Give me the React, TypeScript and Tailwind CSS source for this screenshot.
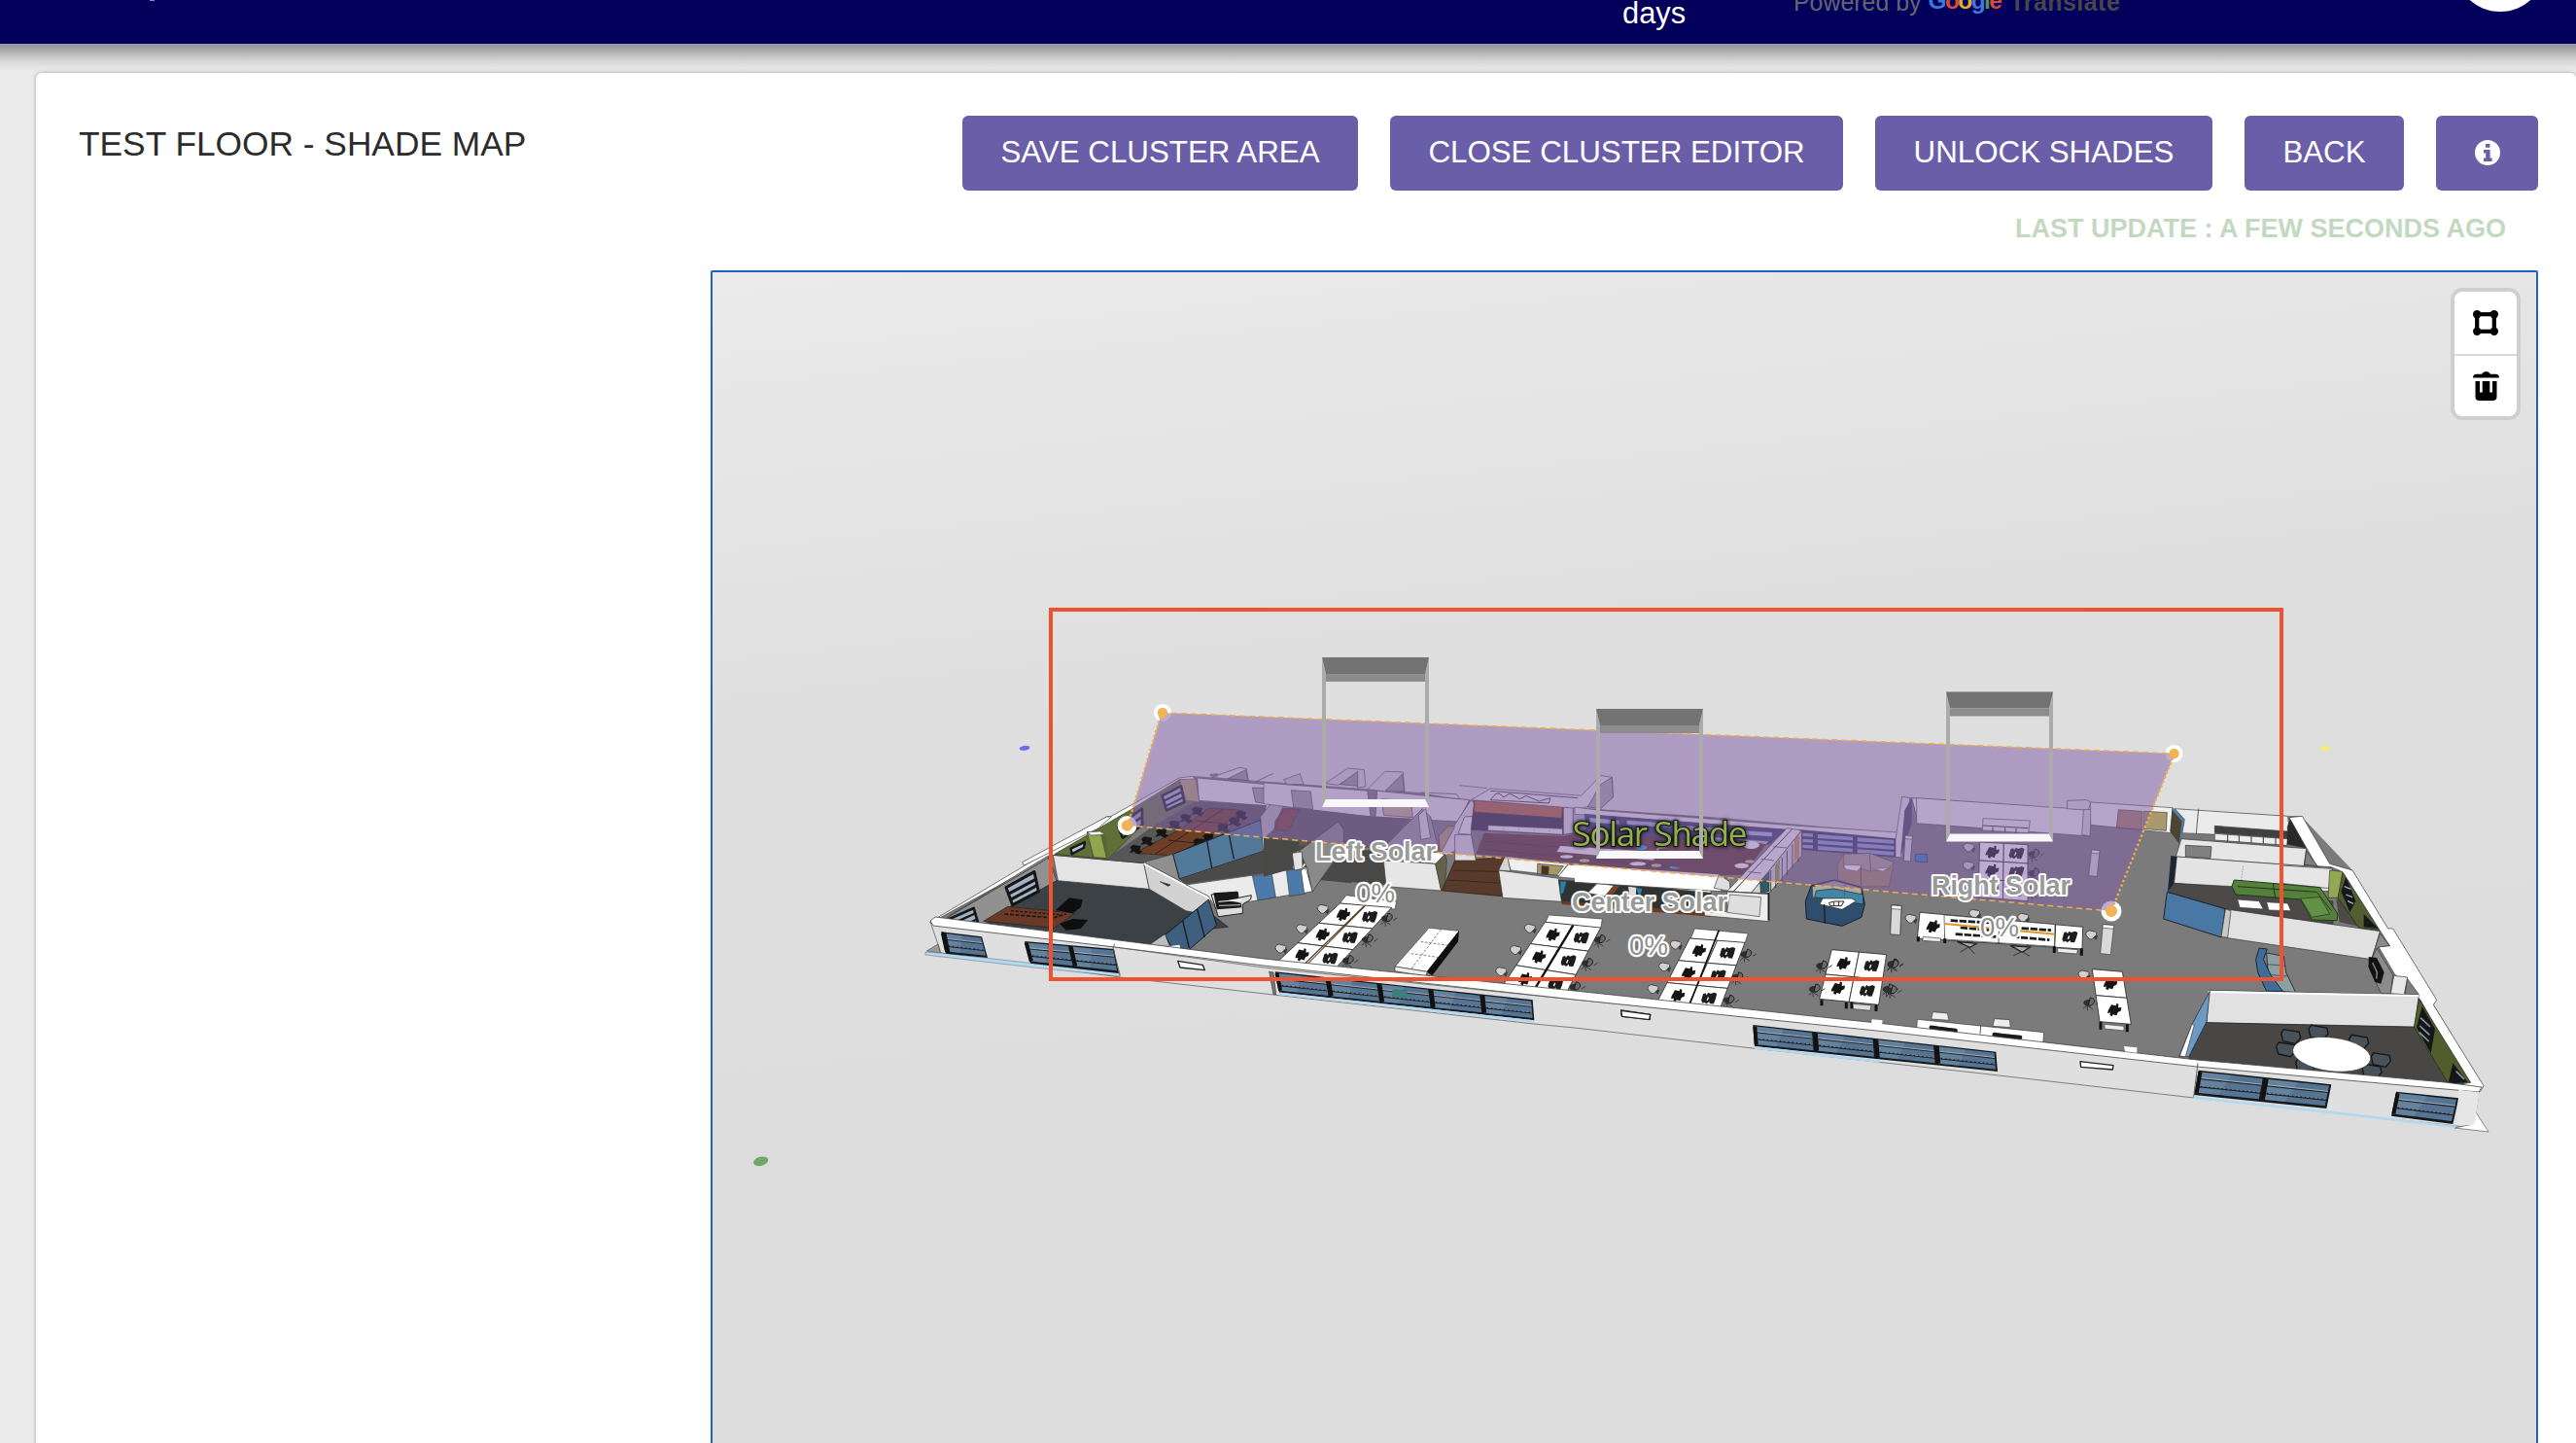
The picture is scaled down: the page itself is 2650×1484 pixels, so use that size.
import React from "react";

type Pt = [number, number];

const mix = (a: Pt, b: Pt, t: number): Pt => [a[0] + (b[0] - a[0]) * t, a[1] + (b[1] - a[1]) * t];
const at = (q: Pt[], u: number, v: number): Pt => mix(mix(q[0], q[1], u), mix(q[3], q[2], u), v);
const parse = (s: string): Pt[] => s.split(" ").map((p) => p.split(",").map(Number) as Pt);
const join = (pts: Pt[]) => pts.map((p) => p[0].toFixed(1) + "," + p[1].toFixed(1)).join(" ");

/* A drawing area at three units per pixel, with its origin at x, y */
function Zone({ x, y, children }: { x: number; y: number; children: React.ReactNode }) {
  return <g transform={`translate(${x} ${y}) scale(0.33333)`}>{children}</g>;
}

function P({ d, f, s = "#3a3a3a", w = 2 }: { d: string; f: string; s?: string; w?: number }) {
  return <polygon points={d} fill={f} stroke={s} strokeWidth={w} strokeLinejoin="round" />;
}

function L({ d, s = "#333", w = 2.5, dash }: { d: string; s?: string; w?: number; dash?: string }) {
  return <polyline points={d} fill="none" stroke={s} strokeWidth={w} strokeDasharray={dash} />;
}

function Windows({ d, n, sill = true }: { d: string; n: number; sill?: boolean }) {
  const q = parse(d);
  const out: React.ReactNode[] = [];
  for (let i = 0; i < n; i++) {
    const a = i / n + 0.03 / n;
    const b = (i + 1) / n - 0.03 / n;
    const cell = [at(q, a, 0.06), at(q, b, 0.06), at(q, b, 0.9), at(q, a, 0.9)];
    out.push(
      <g key={i}>
        <polygon points={join(cell)} fill="#557493" />
        <polygon points={join([at(cell, 0, 0), at(cell, 0.5, 0), at(cell, 0.35, 1), at(cell, 0, 1)])} fill="#6f8fae" opacity="0.5" />
        <polyline points={join([at(cell, 0, 0.32), at(cell, 1, 0.32)])} stroke="#1c1f22" strokeWidth="4.5" />
        <polyline points={join([at(cell, 0, 0.28), at(cell, 1, 0.28)])} stroke="#b9c3cc" strokeWidth="2.5" />
        <polyline points={join([at(cell, 0, 0.7), at(cell, 1, 0.7)])} stroke="#16191c" strokeWidth="5" />
        <polyline points={join([at(cell, 0, 0.67), at(cell, 1, 0.67)])} stroke="#9fabb6" strokeWidth="2" strokeDasharray="9 4" />
        <polyline points={join([at(cell, 0, 0), at(cell, 0, 1)])} stroke="#111" strokeWidth="12" />
      </g>,
    );
  }
  return (
    <g>
      <polygon points={join(q)} fill="#15181b" />
      {out}
      {sill && <polyline points={join([at(q, 0, 1.06), at(q, 1, 1.06)])} stroke="#b4d8f0" strokeWidth="8" fill="none" />}
    </g>
  );
}

function Chair({ x, y, dark }: { x: number; y: number; dark?: boolean }) {
  return dark ? (
    <g transform={`translate(${x} ${y})`}>
      <ellipse cx="0" cy="2" rx="15" ry="10" fill="#2e2e2e" />
      <path d="M6-14q16 2 12 16q-8 12-18 8z" fill="#6a6a6a" stroke="#1c1c1c" strokeWidth="3" />
      <path d="M-16 20L-4 10L14 22M-4 10L-2 26M22 8L34 0" fill="none" stroke="#3a3a3a" strokeWidth="3" />
    </g>
  ) : (
    <g transform={`translate(${x} ${y})`}>
      <path d="M2 4l18-4l-6 16z" fill="#3c3c3c" />
      <path d="M-18-4Q-16-14-6-14L12-10Q18-8 14 0L2 12Q-2 14-6 12L-16 2Z" fill="#d0d0d0" stroke="#333" strokeWidth="2.5" />
    </g>
  );
}

function Desks({ d, rows, cols, chairs = true }: { d: string; rows: number; cols: number; chairs?: boolean }) {
  const q = parse(d);
  const out: React.ReactNode[] = [];
  for (let r = 0; r < rows; r++) {
    for (let c = 0; c < cols; c++) {
      const cell = [
        at(q, c / cols, r / rows),
        at(q, (c + 1) / cols, r / rows),
        at(q, (c + 1) / cols, (r + 1) / rows),
        at(q, c / cols, (r + 1) / rows),
      ];
      const m = at(cell, 0.54, 0.5);
      out.push(
        <g key={r + "-" + c}>
          <polygon points={join(cell)} fill="#fff" stroke="#2a2a2a" strokeWidth="2.5" />
          {c % 2 === 0 ? (
            <path
              transform={`translate(${m[0]} ${m[1]})`}
              d="M-20 2L-10-16L4-13L6-20L12-18L11-7L21-8L19 3L10 7L6 17L-5 14L-8 20L-15 16L-13 9L-22 10Z"
              fill="#141414"
            />
          ) : (
            <path
              transform={`translate(${m[0]} ${m[1]})`}
              d="M-24 6L-18-14L-10-16L-8-10L-2-18L4-14L16-18L24-14L20 2L14 17L2 16L0 10L-8 17L-14 12L-20 15ZM-4-4L-8 6L-4 7L0-3Z"
              fill="#1c1c1c"
            />
          )}
        </g>,
      );
    }
    if (chairs) {
      const a = at(q, 0, (r + 0.3) / rows);
      const b = at(q, 1, (r + 0.55) / rows);
      out.push(<Chair key={"a" + r} x={a[0] - 32} y={a[1]} />);
      out.push(<Chair key={"b" + r} x={b[0] + 16} y={b[1] - 4} dark />);
    }
  }
  return <g>{out}</g>;
}

function Post({ d }: { d: string }) {
  const q = parse(d);
  return (
    <g>
      <P d={d} f="#d9d9d9" />
      <polygon points={join([q[0], q[1], at(q, 1, 0.12), at(q, 0, 0.12)])} fill="#fff" stroke="#444" strokeWidth="2" />
    </g>
  );
}

function Floor() {
  return (
    <g>
      <polygon
        points="957,948 1227,798 1390,810 1460,815 1513,823 1610,830 1760,840 1953,857 1960,820 2080,828 2127,833 2237,832 2353,839 2367,839 2420,895 2555,1118 2513,1117 2260,1094 1940,1060 1620,1026 1300,992 1147,974"
        fill="#7b7b7b"
      />
      {/* west wing */}
      <Zone x={930} y={740}>
        <P d="80,625 625,300 640,298 850,180 890,175 905,190 700,310 470,415 110,612" f="#fff" />
        <P d="370,450 365,440 625,300 640,300 600,335" f="#fff" />
        <P d="140,605 445,420 475,495 330,580 240,635 130,625" f="#919191" />
        <P d="475,495 755,520 930,585 1000,640 810,660 750,700 240,640 330,575" f="#3c4145" s="#222" />
        <P d="465,415 705,275 760,300 630,430" f="#5e6f38" s="#2c361a" />
        <P d="705,275 850,185 900,190 910,250 760,340" f="#68784a" s="#444" />
        <P d="905,180 1170,205 1120,280 1105,265 910,250" f="#ececec" s="#444" />
        <P d="950,178 1035,148 1057,152 1063,188 1040,184 985,182" f="#e2e2e2" s="#444" />
        <P d="1000,182 1055,155 1062,188" f="#999" s="#444" />
        <P d="943,168 970,166 968,176 945,175" f="#777" s="none" />
        <L d="1085,192 1140,166" s="#555" />
        <P d="625,430 760,335 900,252 1120,265 1100,320 840,415 740,443" f="#575757" s="none" />
        <P d="850,185 900,183 912,255 870,250" f="#b4a774" s="#555" />
        <P d="565,347 607,350 627,428 585,425" f="#8fa64f" s="#333" />
        <P d="565,347 605,345 620,355 578,357" f="#fff" />
        <P d="607,352 622,360 630,428 624,430" f="#56682d" s="none" />
        <P d="515,398 558,378 555,395 518,415" f="#a9c0d4" s="#161616" w={7} />
        <P d="660,330 735,275 735,325 675,365" f="#8ca4b8" s="#1d1d1d" w={8} />
        <L d="668,345 735,300" s="#1d1d1d" w={8} />
        <P d="797,235 855,205 865,255 810,280" f="#9fb8d8" s="#222" w={8} />
        <L d="800,252 860,222" s="#222" w={6} />
        <L d="805,268 862,240" s="#222" w={6} />
        <P d="940,273 1045,280 955,350 835,420 712,412 860,335" f="#6c3f26" s="#222" />
        <L d="985,277 775,415" s="#2c1a12" />
        <L d="900,312 1000,322" s="#2c1a12" />
        <L d="815,372 910,382" s="#2c1a12" />
        {([[715, 400], [750, 375], [795, 350], [835, 325], [870, 305], [905, 283], [1040, 295], [1020, 315], [985, 335], [940, 365], [910, 380]] as Pt[]).map(([x, y]) => (
          <path key={x} transform={`translate(${x} ${y})`} d="M-18-6L-8-14L16-10L12 4L22 6L10 16L-4 8L-20 12L-12 2Z" fill="#151515" />
        ))}
        {/* white partition and slanted wall */}
        <P d="460,418 740,443 757,523 475,497" f="#e4e4e4" />
        <P d="740,443 950,555 905,597 870,590 757,523" f="#d2d2d2" />
        <L d="740,443 950,555" s="#fff" w={7} />
        <P d="790,500 822,510 815,514" f="#222" />
        <P d="740,440 830,415 850,490 870,508" f="#8f8f8f" />
        <P d="830,415 1100,310 1112,405 850,492" f="#52789a" s="#1e1e1e" w={3} />
        <L d="935,375 950,458" s="#1e1e1e" w={4} />
        <L d="1003,355 1018,430" s="#1e1e1e" w={4} />
        <P d="870,508 850,492 1112,405 1140,365 1380,375 1380,505 1285,495 1240,455" f="#4a4a48" s="none" />
        <P d="1100,300 1175,205 1190,215 1120,395 1108,402" f="#b5b5b5" />
        <P d="1190,210 1380,230 1380,285 1195,270" f="#e9e9e9" />
        <P d="1120,395 1190,270 1380,285 1380,380" f="#585858" s="none" />
        <P d="1075,210 1140,212 1138,262 1085,255" f="#a0a0a0" />
        <P d="1195,220 1252,222 1262,275 1205,270" f="#a0a0a0" />
        <P d="1145,315 1170,275 1220,275 1190,345 1145,340" f="#7a443a" />
        <P d="870,510 1080,480 1245,455 1258,530 1090,558 960,580 940,545" f="#ebebeb" />
        <P d="1075,482 1135,475 1147,548 1092,558" f="#4c7ba9" />
        <P d="1180,466 1225,460 1237,538 1190,545" f="#4c7ba9" />
        <P d="1195,415 1215,405 1230,410 1230,458 1200,460" f="#e0e0e0" />
        <P d="1245,455 1340,315 1357,330 1357,400 1290,490 1258,530" f="#9a9a9a" />
        <L d="1230,455 1335,315" s="#fff" w={5} />
        {/* glass corner */}
        <P d="805,665 940,555 965,635 880,710 825,700" f="#3f5f80" s="#1a1a1a" w={3} />
        <L d="860,620 880,705" s="#1a1a1a" w={4} />
        <L d="905,585 928,672" s="#1a1a1a" w={4} />
        <P d="750,700 805,662 820,700" f="#bdbdbd" />
        <P d="815,700 850,695 855,712 830,712" f="#fff" s="none" />
        <P d="948,540 1030,532 1032,550 1072,542 1070,555 1045,570 1045,598 970,608" f="#dedede" s="#222" w={3} />
        <P d="955,535 1028,530 1032,552 1000,558 1040,566 1042,580 965,586" f="#191919" s="none" />
        <L d="970,562 1040,556" s="#fff" w={3} />
        <L d="972,574 1038,572" s="#ccc" w={3} />
        {/* meeting table */}
        <P d="320,577 528,597 465,643 245,622" f="#6a3a28" s="#222" />
        <L d="310,600 460,612 500,600" s="#251510" w={5} dash="12 5" />
        <L d="330,590 480,602" s="#251510" w={4} dash="9 5" />
        <path d="M468 588L510 550L552 556L545 580L520 598ZM480 630L520 615L568 618L545 645L500 650ZM318 645L345 640L368 645L350 658L318 652Z" fill="#0e0e0e" />
        <P d="315,518 402,470 415,530 335,572" f="#9fb2c6" s="#161616" w={9} />
        <L d="322,538 405,494" s="#161616" w={9} />
        <L d="328,556 410,512" s="#161616" w={9} />
        <P d="140,615 215,582 232,640 160,628" f="#9fb2c6" s="#161616" w={8} />
        <L d="160,625 222,597" s="#161616" w={7} />
        <L d="182,636 228,615" s="#161616" w={7} />
        <L d="445,425 470,495" />
        <L d="130,613 460,418 740,443" s="#444" w={3} />
      </Zone>

      {/* centre */}
      <Zone x={1300} y={640}>
        <P d="0,495 320,520 330,600 120,575 0,560" f="#eaeaea" s="#444" />
        <P d="85,518 145,522 152,578 92,570" f="#a0a0a0" />
        <P d="190,497 260,450 310,455 315,507 290,510 285,470 230,502" f="#d8d8d8" s="#444" />
        <P d="235,500 290,460 290,505" f="#999" />
        <P d="320,515 375,460 430,462 435,522 395,525" f="#dcdcdc" s="#444" />
        <P d="375,520 428,468 433,520" f="#999" />
        <P d="62,485 112,467 123,500 72,500" f="#c9c9c9" s="#444" />
        <P d="350,520 635,548 600,615 510,610 345,600" f="#e8e8e8" s="#444" />
        <P d="365,545 455,552 460,602 370,595" f="#c7b392" />
        <P d="120,575 345,600 455,605 365,700 130,680 0,665 30,640" f="#585858" s="none" />
        <P d="35,635 60,580 108,577 78,642 40,642" f="#7a443a" />
        <P d="110,705 230,615 247,640 247,690 150,832 135,760" f="#8a8a8a" />
        <P d="180,795 240,700 375,705 378,810" f="#484846" s="none" />
        <P d="0,665 110,678 90,760 0,785" f="#484846" s="none" />
        <P d="88,712 118,708 120,760 95,765" f="#e4e4e4" />
        <P d="115,765 130,758 150,830 125,835" f="#fff" />
        <P d="365,700 490,575 515,600 540,700" f="#999" />
        <P d="478,595 500,575 515,665 485,670" f="#ddd" />
        <P d="485,525 595,530 605,545 560,540 500,530" f="#e2e2e2" />
        <P d="640,548 540,700 560,720 590,705 660,570" f="#ddd" />
        <P d="540,660 570,628 590,630 545,715" f="#b49e70" />
        <P d="370,735 530,745 548,828 378,815" f="#e6e6e6" />
        <P d="360,722 545,708 560,720 530,745" f="#fff" />
        <P d="530,745 560,715 565,735 560,800 548,828" f="#65624c" />
        <P d="590,735 750,725 735,845 550,828" f="#573a2b" s="#2c1d14" />
        <L d="585,765 740,770" s="#3c261b" w={3} />
        <L d="570,795 738,805" s="#3c261b" w={3} />
        <P d="590,655 640,655 655,735 590,735" f="#ddd" />
        <P d="620,600 645,598 640,655 600,652" f="#eee" />
        {/* kitchen */}
        <P d="650,550 925,568 925,655 640,640" f="#2c2c3c" />
        <P d="650,550 922,568 920,604 650,585" f="#b0683c" s="#5a3018" />
        <P d="692,626 922,637 922,655 692,642" f="#f0f0f0" />
        <L d="692,634 922,646" s="#555" w={2} dash="3 44" />
        <P d="680,650 930,660 1100,600 1380,640 1380,785 750,722 655,715" f="#5a3a2c" s="none" />
        <L d="680,675 1380,730" s="#452c20" w={3} />
        <L d="670,700 1380,765" s="#452c20" w={3} />
        <P d="925,570 955,572 955,650 925,655" f="#e0e0e0" />
        <P d="955,572 1380,605 1380,650 955,620" f="#b8bdd4" s="#444" />
        <P d="640,548 700,513 980,535 1040,473 1075,478 1078,540 980,575" f="#ebebeb" s="#444" />
        <path d="M700 520L970 542M715 530Q730 524 740 540L760 528L790 545L810 535L850 552L885 542L880 558L700 548Z" fill="none" stroke="#444" strokeWidth="3" />
        <P d="1000,570 1040,500 1075,478 1078,540 1040,575" f="#aaa" />
        <L d="603,503 690,512" s="#555" w={2} />
        <P d="915,690 1330,715 1320,745 905,708" f="#f6f6f6" s="none" />
        <ellipse cx="990" cy="735" rx="16" ry="5" fill="#c9d27a" />
        <ellipse cx="1165" cy="695" rx="18" ry="8" fill="#35a5e0" />
        <ellipse cx="1230" cy="700" rx="18" ry="8" fill="#c9d27a" />
        <ellipse cx="1270" cy="755" rx="18" ry="6" fill="#35a5e0" />
        <ellipse cx="1212" cy="750" rx="16" ry="5" fill="#c9d27a" />
        <ellipse cx="1155" cy="745" rx="26" ry="6" fill="#fff" />
        <ellipse cx="935" cy="723" rx="20" ry="5" fill="#fff" />
        {/* reception counter */}
        <P d="725,765 910,790 920,862 738,850" f="#e6e6e6" />
        <P d="750,722 940,745 912,782 762,765" f="#efefef" />
        <P d="725,765 745,722 752,722 762,768" f="#d5d5d5" />
        <P d="845,745 925,752 905,780 845,776" f="#a89766" />
        <P d="858,752 880,754 878,778 858,776" f="#4a3323" />
        <P d="910,795 1380,825 1380,905 920,865" f="#2f3430" />
        <P d="915,798 935,800 925,835 915,840" f="#2b7fae" />
        <P d="1030,805 1080,812 1055,845 1000,835" f="#fff" s="#555" />
        <P d="1080,812 1098,814 1060,862 1040,858" f="#7a4425" s="none" />
        <P d="1125,815 1150,818 1148,850 1130,850" f="#ddd" s="none" />
        <P d="1150,820 1168,822 1160,850" f="#2b7fae" s="none" />
        <P d="920,860 1380,895 1380,908 920,870" f="#6c3a22" s="none" />
        <P d="940,747 1380,785 1380,835 908,785" f="#fff" s="#444" />
        {/* desks */}
        <P d="255,842 410,862 405,885 235,867" f="#fff" />
        <Desks d="235,867 395,880 215,1075 40,1050" rows={3} cols={2} />
        <L d="310,875 125,1055" s="#5d3f16" w={4} />
        <P d="510,943 603,952 505,1078 405,1062" f="#fff" />
        <P d="603,952 600,985 520,1090 503,1078" f="#0d0d0d" s="none" />
        <P d="405,1062 505,1078 500,1092 405,1076" f="#eee" />
        <L d="547,948 455,1070" s="#444" w={2} dash="8 5" />
        <L d="485,985 578,998" s="#444" w={2} dash="8 5" />
        <L d="455,1022 550,1035" s="#444" w={2} dash="8 5" />
        <P d="880,903 1045,915 1040,945 870,925" f="#fff" />
        <Desks d="868,925 1040,942 925,1160 735,1125" rows={3} cols={2} />
        <L d="955,935 825,1150" s="#111" w={7} />
      </Zone>

      {/* right of centre */}
      <Zone x={1620} y={700}>
        <P d="0,390 75,400 690,448 1000,468 990,490 660,460 0,412" f="#ededed" s="#444" />
        <P d="30,412 650,460 600,505 40,470" f="#39406c" />
        <P d="45,422 138,430 138,445 45,437" f="#aab9e2" />
        <P d="160,430 300,440 300,455 160,445" f="#aab9e2" />
        <P d="320,445 470,455 470,470 320,460" f="#aab9e2" />
        <P d="490,460 610,467 610,482 490,474" f="#aab9e2" />
        <P d="400,480 600,495 590,506 400,495" f="#aab9e2" />
        <P d="690,460 990,488 1000,545 690,520" f="#373c60" />
        {[0, 1, 2].map((i) => (
          <g key={i} transform={`translate(0 ${i * 18})`}>
            <polygon points="750,474 858,482 858,493 750,486" fill="#8fa0d0" />
            <polygon points="872,484 985,492 985,503 872,496" fill="#8fa0d0" />
            <polygon points="703,470 735,472 735,482 703,480" fill="#8fa0d0" />
          </g>
        ))}
        <P d="260,520 500,490 590,505 520,600 430,600 240,560" f="#5a3a2c" s="none" />
        <ellipse cx="545" cy="507" rx="25" ry="12" fill="#fff" />
        <ellipse cx="515" cy="571" rx="22" ry="8" fill="#fff" />
        <ellipse cx="540" cy="558" rx="14" ry="5" fill="#c9d27a" />
        <P d="0,568 445,598 450,650 0,622" f="#fff" s="none" />
        <P d="430,640 445,598 478,620 480,650" f="#ddd" />
        <P d="470,650 655,455 700,462 545,655" f="#f4f4f4" />
        <L d="490,650 672,457" s="#333" w={3} />
        <L d="535,590 575,594" s="#555" />
        <L d="575,550 615,555" s="#555" />
        <L d="612,512 655,516" s="#555" />
        <P d="545,655 700,462 700,540 600,655" f="#d4d4d4" />
        <path d="M575 615V655M590 600V650M605 585V650M620 570V640M640 545V618M655 525V600M672 505V580M690 480V560" stroke="#444" strokeWidth="3" />
        <P d="572,618 600,590 600,650 574,655" f="#2d5c64" />
        <P d="618,570 632,552 632,615 618,628" f="#8e9f3c" s="none" />
        <P d="678,490 692,475 692,545 678,558" f="#c6904a" s="none" />
        {/* white cabinet front */}
        <P d="470,650 600,658 600,743 400,725 400,715 470,712" f="#ededed" s="#333" />
        <P d="478,660 575,668 570,728 470,715" f="#dedede" s="#444" />
        <L d="0,622 450,650 600,658" s="#444" />
        <L d="598,655 598,740" s="#222" w={5} />
        {/* booth seating */}
        <P d="810,570 830,535 910,533 985,560 970,635 880,635 812,615" f="#a68c66" s="#555" />
        <P d="830,535 910,533 985,560 968,582 912,588 885,580 830,578" f="#a9a493" s="#555" />
        <P d="830,568 890,570 870,588 835,582" f="#fff" s="#666" />
        <P d="920,580 970,578 950,588" f="#fff" s="#666" />
        <L d="910,533 914,588" s="#555" />
        <L d="883,570 883,635" s="#444" />
        <P d="712,680 730,632 800,615 885,638 895,690 885,730 825,757 715,735" f="#2f4d6d" s="#15202b" w={3} />
        <P d="733,636 800,617 885,640 885,672 735,670" f="#a9aaa0" s="#444" />
        <P d="745,648 800,642 890,660 890,690 740,668" f="#4286a6" s="#222" />
        <P d="765,672 855,672 868,680 825,706 756,690" f="#fff" s="#222" />
        <path d="M785 685l18-4h28l-8 14h-35zM800 684v10M815 682v12" fill="none" stroke="#222" strokeWidth="3" />
        <L d="770,690 772,750" s="#111" w={3} />
        <L d="835,615 832,665" s="#555" w={2} />
        {/* partitions */}
        <P d="990,490 1010,358 1035,362 1010,545 990,545" f="#e6e6e6" s="#444" />
        <P d="1018,400 1040,360 1040,440 1005,545" f="#4b4660" s="none" />
        <P d="1040,362 1380,387 1380,460 1060,438" f="#f1f1f1" s="#444" />
        <L d="1060,365 1060,438" s="#555" w={3} />
        <Post d="1020,478 1042,480 1036,558 1015,556" />
        <P d="1052,535 1088,535 1088,560 1050,558" f="#2a7fc0" s="#333" />
        {/* desks */}
        <P d="370,765 535,780 525,810 358,795" f="#fff" />
        <Desks d="355,795 525,808 445,1020 250,1000" rows={3} cols={2} />
        <L d="445,770 350,1010" s="#111" w={5} />
        <Desks d="793,830 962,845 938,1000 755,982" rows={2} cols={2} chairs={false} />
        <path d="M762 985V1003M838 992V1012M855 992V1012M930 1000V1020" stroke="#111" strokeWidth="9" />
        <P d="858,997 915,1002 912,1018 860,1013" f="#ddd" />
        <Chair x={760} y={878} dark />
        <Chair x={738} y={950} dark />
        <Chair x={980} y={872} dark />
        <Chair x={965} y={950} dark />
        <Post d="977,692 1008,694 1004,784 974,782" />
      </Zone>

      {/* east wing */}
      <Zone x={1940} y={680}>
        <P d="95,422 620,458 630,540 95,500" f="#f1f1f1" s="#444" />
        <P d="560,430 620,428 632,435 625,460 560,455" f="#e0e0e0" s="#444" />
        <P d="610,458 635,458 630,540 605,535" f="#dadada" s="#444" />
        <P d="632,435 885,452 880,530 632,505" f="#f1f1f1" s="#444" />
        <P d="718,458 790,463 790,520 712,513" f="#a98562" />
        <P d="795,463 868,467 865,523 795,517" f="#aa996c" />
        <P d="885,455 920,490 905,560 878,525" f="#4d4432" s="#333" />
        <L d="885,455 918,492 905,600 868,710" s="#4f80aa" w={8} />
        <P d="892,455 1240,478 1250,545 915,530 922,488" f="#ebebeb" s="#444" />
        <L d="965,455 958,532" s="#444" />
        <P d="915,530 1250,560 1290,580 915,550" f="#777" s="none" />
        <P d="1015,508 1240,525 1240,545 1015,530" f="#404040" />
        <P d="1015,532 1240,548 1238,568 1015,552" f="#eee" />
        <path d="M1055 535V555M1090 538V558M1128 540V560M1165 543V563M1203 546V566" stroke="#333" strokeWidth="3" />
        <P d="912,548 1298,578 1290,632 895,603" f="#e6e6e6" s="#333" />
        <P d="925,568 1005,572 1002,608 925,603" f="#808080" s="#333" />
        <P d="898,603 1378,638 1372,710 1060,700 890,685" f="#e3e3e3" s="#333" />
        <P d="880,600 898,603 888,690 870,710" f="#1c2530" s="none" />
        <P d="890,685 1070,695 1380,740 1380,812 1050,765 870,712" f="#4b4a49" s="#333" />
        <L d="1103,632 1095,690" s="#777" w={2} dash="4 4" />
        <P d="868,712 1047,764 1036,852 857,795" f="#4a78a5" s="#222" w={3} />
        {/* desks in the purple cluster */}
        <P d="300,485 445,492 440,530 298,522" f="#eee" s="#444" />
        <L d="300,507 440,515" s="#333" w={3} />
        <path d="M330 512v14M368 514v14M402 516v14" stroke="#333" strokeWidth="3" />
        <Desks d="290,558 438,566 438,740 285,728" rows={3} cols={2} />
        <Post d="635,582 660,584 652,664 626,662" />
        <Post d="18,753 48,755 44,845 14,842" />
        <Post d="670,812 704,815 694,905 662,902" />
        <Chair x={78} y={795} />
        <Chair x={275} y={780} />
        <Chair x={425} y={792} />
        <Desks d="105,775 608,820 606,888 97,855" rows={1} cols={6} chairs={false} />
        <P d="180,783 522,812 520,880 182,858" f="#fff" />
        <path d="M200 800L345 808M230 822L330 830M215 842L340 850M365 820L510 830M390 850L505 860" stroke="#1a1a1a" strokeWidth="8" strokeDasharray="22 5" />
        <L d="182,810 522,842" s="#e0962a" w={6} />
        <L d="350,800 348,870" s="#333" />
        <path d="M100 850V865M182 856V870M520 880V900M604 886V908" stroke="#111" strokeWidth="9" />
        <P d="115,850 170,855 168,866 113,862" f="#eee" />
        <P d="530,885 592,890 590,903 530,898" f="#eee" />
        <path d="M220 865l60 6-20 12zM385 878l60 4-24 16z" fill="#aaa" stroke="#222" strokeWidth="4" />
        <path d="M255 882l-26 16M255 882l20 22M420 896l-26 12M420 896l24 14" fill="none" stroke="#333" strokeWidth="3" />
        <Chair x={635} y={845} />
        <Chair x={20} y={935} dark />
        <Chair x={15} y={1015} dark />
        <Chair x={612} y={968} />
        <Chair x={625} y={1052} dark />
        <Desks d="637,950 730,958 757,1120 660,1112" rows={2} cols={1} chairs={false} />
        <path d="M663 1112V1136M745 1120V1144" stroke="#111" strokeWidth="9" />
        <P d="675,1120 735,1126 735,1140 675,1134" f="#eee" />
        <P d="145,1082 190,1086 195,1108 140,1104" f="#eee" />
        <P d="335,1103 382,1106 385,1130 330,1126" f="#eee" />
        <P d="97,1105 488,1145 485,1180 95,1140" f="#fff" />
        <L d="293,1125 291,1150" s="#333" />
        <path d="M140 1130L215 1140M335 1152L415 1161" stroke="#1b1b1b" strokeWidth="13" strokeLinecap="round" strokeDasharray="22 7" />
      </Zone>

      <Zone x={2180} y={780}>
        {/* lounge */}
        <P d="500,330 655,340 680,400 640,400 500,385" f="#e6e6e6" s="#333" />
        <P d="650,345 700,350 680,430 645,430" f="#93a951" s="#333" />
        <P d="355,375 620,398 675,480 672,500 595,498 560,435 360,420 348,395" f="#55803c" s="#22361a" w={3} />
        <L d="365,395 610,412 655,470" s="#22361a" w={3} />
        <L d="475,385 482,432" s="#22361a" w={3} />
        <P d="560,432 620,428 650,480 595,490" f="#639047" s="#22361a" />
        <P d="365,435 432,440 445,465 372,460" f="#fff" />
        <P d="455,443 520,447 530,470 462,468" f="#fff" />
        <P d="330,465 805,533 780,620 328,553" f="#e1e1e1" s="#333" />
        <P d="328,465 345,470 335,553 315,550" f="#c8c8c8" s="#333" />
        <P d="670,435 695,430 745,520 680,505" f="#4b4a49" s="none" />
        <P d="690,350 805,530 740,522 675,430" f="#525e31" s="#222" />
        <path d="M700 365L730 440L712 475L685 410ZM755 480L800 525L755 520Z" fill="#16181a" />
        <path d="M695 395l20 8M700 420l20 8M705 440l18 8" stroke="#9fb0bd" strokeWidth="4" />
        {/* outer wall rim */}
        <P d="525,182 565,178 650,325 720,345 830,525 845,525 980,745 970,760 1125,1010 1115,1027 1050,1015 1070,998 930,745 850,665 800,580 835,578 690,350 655,335 610,332" f="#fff" s="#333" />
        <P d="528,190 575,275 520,265 520,210" f="#28292b" s="#222" />
        <P d="578,285 612,332 572,328" f="#808080" s="#333" />
        <P d="805,540 835,578 800,582 780,615" f="#8a8a8a" s="#333" />
        <P d="795,585 845,668 838,725 808,725 770,640" f="#8b8b8b" s="#333" />
        <path d="M770 612L795 615L818 660L808 695L790 690L770 645Z" fill="#111" />
        <path d="M782 630l14 30 -2 20" stroke="#777" strokeWidth="5" fill="none" />
        <P d="848,670 890,675 880,728 838,725" f="#e8e8e8" s="#333" />
        <P d="890,680 925,728 882,728" f="#7d7d7d" s="#333" />
        {/* curved bench */}
        <path d="M455 600L508 610L515 660L545 722L500 718L460 665Z" fill="#8aa0a2" stroke="#333" strokeWidth="3" />
        <path d="M432 585L457 588L445 620L468 668L505 718L455 718L428 660L422 620Z" fill="#3f6d98" stroke="#182634" strokeWidth="3" />
        <path d="M457 635L512 640M470 668L520 672" stroke="#333" strokeWidth="2" />
        {/* oval table room */}
        <P d="278,715 925,730 912,830 270,815" f="#e1e1e1" s="#333" />
        <L d="275,720 925,732" s="#fff" w={6} />
        <P d="262,815 912,828 1020,1008 230,935 215,925" f="#484745" s="#222" />
        <P d="280,718 270,812 215,920 185,920 225,820" f="#6c9ac4" s="#222" />
        <P d="225,820 232,822 205,920 187,918" f="#fff" s="#333" />
        <P d="925,742 1085,1000 1020,1010 910,828" f="#515e2c" s="#222" />
        <path d="M935 765L975 835L962 910L918 830ZM1030 940L1075 998L1015 1005Z" fill="#14171a" />
        <path d="M930 800l30 28M928 825l30 28M926 845l30 28M1040 965l25 25" stroke="#8798a5" strokeWidth="5" />
        {([[530, 858], [615, 845], [740, 875], [808, 930], [515, 898], [575, 948], [780, 965]] as Pt[]).map(([x, y]) => (
          <path key={x} transform={`translate(${x} ${y})`} d="M-30-10L-22-22L26-14L30 4L14 22L-24 14Z" fill="#48525b" stroke="#161616" strokeWidth="4" />
        ))}
        <ellipse cx="656" cy="913" rx="121" ry="52" fill="#fff" stroke="#333" strokeWidth="2" transform="rotate(7 656 913)" />
      </Zone>
    </g>
  );
}

function FrontWall() {
  return (
    <g strokeLinejoin="round">
      <polygon
        points="957,948 968,980 1152,1005 1310,1023 1578,1053 1620,1057 1803,1078 2030,1103 2257,1129 2527,1158 2545,1160 2550,1123 2513,1117 2260,1094 1940,1060 1620,1028 1300,995 1147,974"
        fill="#dfdfdf"
        stroke="#555"
        strokeWidth="0.7"
      />
      <polygon
        points="957,947 962,943 1143,966 1300,986 1620,1019 1940,1053 2260,1090 2515,1113 2553,1118 2550,1123 2515,1120 2260,1097 1940,1061 1620,1028 1300,993 1147,974 960,952"
        fill="#fff"
        stroke="#444"
        strokeWidth="0.8"
      />
      <Zone x={930} y={740}>
        <P d="70,714 105,693 112,720" f="#999" s="#555" />
        <P d="66,717 130,722 665,782 665,792 400,765 66,726" f="#b4d8f0" s="#667" w={1.5} />
        <Windows d="115,655 240,670 258,735 130,722" n={1} sill={false} />
        <Windows d="372,684 648,708 663,783 390,752" n={2} sill={false} />
        <P d="115,655 130,658 143,722 128,720" f="#111" s="none" />
        <L d="650,692 645,705 667,790" s="#555" />
        <P d="845,745 922,757 928,773 852,765" f="#fff" s="#222" w={4} />
        <P d="1127,778 1140,780 1148,848 1140,848" f="#777" />
      </Zone>
      <Zone x={1300} y={640}>
        <Windows d="35,1078 830,1165 835,1228 48,1142" n={5} />
        <P d="398,1132 445,1135 438,1160 395,1155" f="#3d7d7a" s="none" />
        <P d="1103,1197 1193,1210 1192,1225 1105,1215" f="#fff" s="#222" w={4} />
      </Zone>
      <Zone x={1620} y={700}>
        <Windows d="550,1062 1300,1145 1305,1206 555,1128" n={4} sill={false} />
        <L d="555,1132 940,1175" s="#b4d8f0" w={8} />
        <P d="143,1018 233,1030 230,1046 146,1036" f="#fff" s="#222" w={4} />
        <P d="917,1045 950,1048 948,1062 915,1058" f="#fff" s="none" />
      </Zone>
      <Zone x={1940} y={680}>
        <P d="600,1235 702,1247 700,1260 602,1252" f="#fff" s="#222" w={4} />
        <P d="735,1188 775,1192 775,1208 738,1204" f="#fff" s="none" />
      </Zone>
      <Zone x={2180} y={780}>
        <L d="243,940 240,965 230,1045" s="#444" />
        <P d="1100,1090 1140,1152 1035,1140 1085,1130" f="#fff" s="#555" />
        <Windows d="245,962 655,1006 640,1080 232,1038" n={2} sill={false} />
        <Windows d="855,1028 1048,1048 1030,1128 840,1103" n={1} sill={false} />
        <L d="230,1046 640,1090 1038,1137" s="#b4d8f0" w={8} />
        <P d="1048,1022 1112,1030 1098,1125 1085,1132 1042,1130" f="#e6e6e6" s="none" />
      </Zone>
    </g>
  );
}

function Shade({ x, y }: { x: number; y: number }) {
  return (
    <g transform={`translate(${x} ${y})`}>
      <path d="M0 0L4 17V146L0 154ZM110 0L106 17V146L110 154Z" fill="#ababab" />
      <path d="M0 0H110L106 17H4Z" fill="#737373" />
      <path d="M4 17H106V25H4Z" fill="#8c8c8c" />
      <path d="M4 146H106L110 154H0Z" fill="#f8f7fa" />
    </g>
  );
}

function Label({ x, y, w, children }: { x: number; y: number; w: number; children: string }) {
  return (
    <text
      x={x}
      y={y}
      textLength={w}
      fontSize="27"
      fontWeight="700"
      fill="#989a98"
      stroke="#fff"
      strokeWidth="4"
      strokeLinejoin="round"
      paintOrder="stroke"
      fontFamily="'Liberation Sans', Arial, sans-serif"
    >
      {children}
    </text>
  );
}

function Percent({ x, y }: { x: number; y: number }) {
  return (
    <text
      x={x}
      y={y}
      textLength={40}
      fontSize="27.5"
      fill="#8c8e8c"
      stroke="#fff"
      strokeWidth="4.5"
      strokeLinejoin="round"
      paintOrder="stroke"
      fontFamily="'Liberation Sans', Arial, sans-serif"
    >
      0%
    </text>
  );
}

function Scene() {
  const corners: [number, number, number][] = [
    [1196, 733, 9],
    [2236.5, 775, 9],
    [2172, 937, 10.5],
    [1159.5, 849, 10],
  ];
  return (
    <svg viewBox="733 280 1876 1204" className="block h-[1204px] w-[1876px]">
      <Floor />
      <FrontWall />
      <ellipse cx="1054" cy="769.3" rx="5.3" ry="2.4" fill="#6a6cf0" transform="rotate(-8 1054 769)" />
      <ellipse cx="2392.3" cy="769.3" rx="5.3" ry="2.2" fill="#f2ee6a" transform="rotate(6 2392 769)" />
      <ellipse cx="782.7" cy="1194.3" rx="7.8" ry="4.6" fill="#70a868" transform="rotate(-14 782.7 1194.3)" />
      {corners.map(([x, y, r]) => (
        <circle key={x} cx={x} cy={y} r={r} fill="#fff" />
      ))}
      <polygon points="1195,733 2237,775 2172,937 1160,849" fill="#815ea7" fillOpacity="0.52" />
      <path d="M1195 733L2237 775M2172 937L1160 849" stroke="#f0ac4a" strokeWidth="1.5" strokeDasharray="6 4" />
      <path d="M2237 775L2172 937M1160 849L1195 733" stroke="#f0ac4a" strokeWidth="2.4" strokeDasharray="2.4 2.6" />
      {corners.map(([x, y, r]) => (
        <circle key={x} cx={x} cy={y} r={r * 0.58} fill="#f2b355" />
      ))}
      <text
        x="1617.5"
        y="869.5"
        textLength="180"
        fontSize="35"
        fill="#8fb04c"
        stroke="#141414"
        strokeWidth="2"
        paintOrder="stroke"
        fontFamily="'Open Sans', 'Noto Sans', sans-serif"
        className="[filter:drop-shadow(0_0_2px_#000)]"
      >
        Solar Shade
      </text>
      <Label x={1353} y={885} w={124}>Left Solar</Label>
      <Percent x={1395} y={928} />
      <Label x={1617} y={937} w={160}>Center Solar</Label>
      <Percent x={1676} y={982} />
      <Label x={1987} y={919.5} w={143}>Right Solar</Label>
      <Percent x={2037} y={963} />
      <Shade x={1360} y={676} />
      <Shade x={1642} y={729} />
      <Shade x={2002} y={711.5} />
      <rect x="1081" y="627" width="1266" height="380" fill="none" stroke="#ee5230" strokeWidth="4" />
    </svg>
  );
}

function ActionButton({ width, children }: { width: string; children: React.ReactNode }) {
  return (
    <button className={`flex h-[77px] shrink-0 items-center justify-center whitespace-nowrap rounded-[6px] bg-[#6b5ea9] pb-[2px] text-[31.3px] leading-none text-white ${width}`}>
      {children}
    </button>
  );
}

export default function App() {
  return (
    <div className="flex h-[1484px] w-[2650px] flex-col overflow-hidden bg-[#ebebeb] font-['Liberation_Sans',Arial,sans-serif]">
      <header className="relative z-10 h-[45px] shrink-0 bg-[#02005a]">
        <div className="absolute left-0 top-full h-[28px] w-full border-t-2 border-[#9a97b4] bg-[linear-gradient(180deg,rgba(0,0,0,0.36)_0%,rgba(0,0,0,0.22)_30%,rgba(0,0,0,0.09)_60%,rgba(0,0,0,0.02)_90%,rgba(0,0,0,0)_100%)]" />
        <div className="absolute inset-0 overflow-hidden">
          <span className="absolute left-[154px] top-0 h-px w-[5px] bg-[#8a8ab0]" />
          <span className="absolute left-[1669px] top-0 text-[30.8px] leading-[28px] text-white">days</span>
          <div className="absolute left-[1845px] top-[-12px] flex items-baseline text-[24.9px] leading-[28px]">
            <span className="text-[#65656f]">Powered by</span>
            <span className="ml-[7px] inline-block w-[75px] -translate-y-[2px] text-[24.5px] font-bold tracking-[-1.6px]">
              <span className="text-[#3f74d8]">G</span>
              <span className="text-[#d8493a]">o</span>
              <span className="text-[#dcae2c]">o</span>
              <span className="text-[#3f74d8]">g</span>
              <span className="text-[#4a9a52]">l</span>
              <span className="text-[#d8493a]">e</span>
            </span>
            <span className="ml-[9px] font-bold tracking-[0.5px] text-[#47464c]">Translate</span>
          </div>
          <span className="absolute left-[2525px] top-[-82px] size-[94px] rounded-full bg-white" />
        </div>
      </header>

      <main className="ml-[37px] mt-[30px] h-[1500px] w-[2613px] shrink-0 rounded-[6px] bg-white pr-[39px] shadow-[0_0_4px_rgba(0,0,0,0.3)]">
        <div className="flex items-start pt-[44px]">
          <h1 className="ml-[44px] mt-[9px] w-[470px] whitespace-nowrap text-[35.3px] leading-[40px] text-[#2c2c2c]">
            TEST FLOOR - SHADE MAP
          </h1>
          <div className="ml-auto flex gap-[33px]">
            <ActionButton width="w-[407px]">SAVE CLUSTER AREA</ActionButton>
            <ActionButton width="w-[466px]">CLOSE CLUSTER EDITOR</ActionButton>
            <ActionButton width="w-[347px]">UNLOCK SHADES</ActionButton>
            <ActionButton width="w-[164px]">BACK</ActionButton>
            <ActionButton width="w-[105px]">
              <svg viewBox="0 0 26 26" className="size-[26px]">
                <circle cx="13" cy="13" r="13" fill="#fff" />
                <path d="M11 4h4.4v3.8H11zM9 10h6.6v8.6h2V22H9v-3.4h2.2v-5.2H9z" fill="#6b5ea9" />
              </svg>
            </ActionButton>
          </div>
        </div>
        <p className="mr-[33px] mt-[24px] h-[30px] text-right text-[27px] font-bold leading-[30px] text-[#c3d9bf]">
          LAST UPDATE : A FEW SECONDS AGO
        </p>

        <section className="relative ml-auto mt-[28px] h-[1240px] w-[1880px] overflow-hidden rounded-[2px] border-2 border-[#2160c4] bg-[#dcdcdc] bg-[linear-gradient(174deg,#ebebeb_0%,#e5e5e5_15%,#dfdfdf_33%,#dddddd_60%,#dcdcdc_100%)]">
          <Scene />
          <div className="absolute right-[16px] top-[16px] w-[72px] overflow-hidden rounded-[12px] border-4 border-[#cfcfcf] bg-white">
            <div className="flex h-[66px] items-center justify-center border-b-2 border-[#d8d8d8]">
              <svg viewBox="0 0 26 26" className="size-[26px]">
                <rect x="4.2" y="4.2" width="17.6" height="17.6" fill="none" stroke="#000" strokeWidth="4.2" />
                <circle cx="4.2" cy="4.2" r="4.2" />
                <circle cx="21.8" cy="4.2" r="4.2" />
                <circle cx="4.2" cy="21.8" r="4.2" />
                <circle cx="21.8" cy="21.8" r="4.2" />
              </svg>
            </div>
            <div className="flex h-[62px] items-center justify-center">
              <svg viewBox="0 0 27 30" className="h-[30px] w-[27px]">
                <path d="M0 6.6Q0 3 3.5 2.8H9Q10.5 0 13.5 0T18 2.8H23.5Q27 3 27 6.6Z" />
                <path d="M2.5 10H7V21.5H9.7V10H17.3V21.5H20V10H24.5V26Q24.5 30 20.5 30H6.5Q2.5 30 2.5 26Z" />
              </svg>
            </div>
          </div>
        </section>
      </main>
    </div>
  );
}
